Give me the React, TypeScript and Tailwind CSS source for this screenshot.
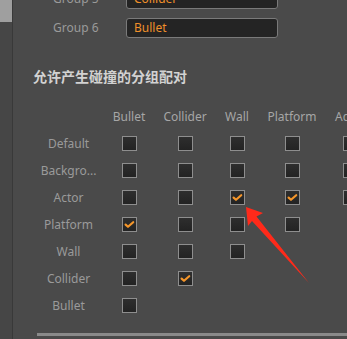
import React from 'react';

const groups = [
  { label: 'Group 5', value: 'Collider' },
  { label: 'Group 6', value: 'Bullet' },
];

const columns = [
  { name: 'Bullet', width: 'w-[50px]' },
  { name: 'Collider', width: 'w-[62px]' },
  { name: 'Wall', width: 'w-[42px]' },
  { name: 'Platform', width: 'w-[68px]' },
  { name: 'Actor', width: 'w-[48px]' },
  { name: 'Background', width: 'w-[80px]' },
  { name: 'Default', width: 'w-[60px]' },
];

// each row lists its checkbox states, one per column (triangular matrix)
const rows = [
  { name: 'Default', checks: [false, false, false, false, false, false, false] },
  { name: 'Backgro...', checks: [false, false, false, false, false, false] },
  { name: 'Actor', checks: [false, false, true, true, false] },
  { name: 'Platform', checks: [true, false, false, false] },
  { name: 'Wall', checks: [false, false, false] },
  { name: 'Collider', checks: [false, true] },
  { name: 'Bullet', checks: [false] },
];

function Checkbox({ checked }: { checked: boolean }) {
  return (
    <div className="w-[15px] h-[15px] border border-[#8e8e8e] bg-gradient-to-b from-[#2e2e2e] to-[#232323] flex items-center justify-center">
      {checked && (
        <svg width="13" height="13" viewBox="0 0 13 13">
          <path
            d="M2.6 6.6 L5 8.8 L10.2 4.2"
            fill="none"
            stroke="#f5962a"
            strokeWidth="2.2"
            strokeLinecap="round"
            strokeLinejoin="round"
          />
        </svg>
      )}
    </div>
  );
}

export default function App() {
  return (
    <div className="relative flex w-[347px] h-[339px] overflow-hidden bg-[#4a4a4a] font-['Noto_Sans','Noto_Sans_CJK_SC',sans-serif]">
      <aside className="w-[13px] shrink-0 bg-[#464646] border-r border-[#393939]">
        <div className="w-[12px] h-[22px] bg-[#9f9f9f]" />
      </aside>

      <main className="flex-1 min-w-0 overflow-hidden">
        <div className="-mt-[11px] flex flex-col gap-[9px] pl-[40px]">
          {groups.map((g) => (
            <div key={g.label} className="flex items-center h-[20px]">
              <span className="w-[73px] text-[12px] text-[#9a9a9a]">{g.label}</span>
              <div className="w-[152px] h-[20px] rounded-[3px] border border-[#7a7a7a] bg-[#242424] px-[7px] flex items-center text-[12px] text-[#f0902a]">
                {g.value}
              </div>
            </div>
          ))}
        </div>

        <h2 className="mt-[29px] ml-[20px] h-[20px] leading-[20px] text-[14px] font-bold text-[#d2d2d2] whitespace-nowrap">
          允许产生碰撞的分组配对
        </h2>

        <div className="mt-[17px] ml-[20px] w-max">
          <div className="flex h-[26px] items-center">
            <div className="w-[71px]" />
            {columns.map((c) => (
              <div key={c.name} className={`${c.width} text-center text-[12px] text-[#a6a6a6] whitespace-nowrap`}>
                {c.name}
              </div>
            ))}
          </div>
          {rows.map((r) => (
            <div key={r.name} className="flex h-[27px] items-center">
              <div className="w-[71px] text-center text-[12px] text-[#9a9a9a] whitespace-nowrap">{r.name}</div>
              {r.checks.map((checked, i) => (
                <div key={i} className={`${columns[i].width} flex justify-center`}>
                  <Checkbox checked={checked} />
                </div>
              ))}
            </div>
          ))}
        </div>

        <div className="mt-[14px] ml-[24px] h-[3px] bg-[#8a8a8a]" />
      </main>

      <svg className="absolute inset-0 pointer-events-none" width="347" height="339" viewBox="0 0 347 339">
        <polygon
          points="246,207 263,213 256.5,216.5 309,283 252,221 248,226"
          fill="#ff2a1a"
        />
      </svg>
    </div>
  );
}
